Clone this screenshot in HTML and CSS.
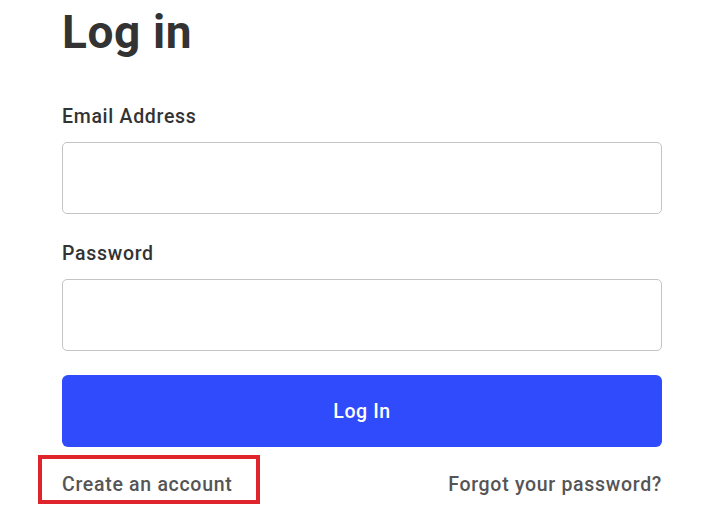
FILE: index.html
```html
<!DOCTYPE html>
<html lang="en">
<head>
<meta charset="utf-8">
<title>Log in</title>
<link rel="stylesheet" href="styles.css">
</head>
<body>
<main class="login">
  <h1 class="title">Log in</h1>
  <form class="form">
    <label class="field">
      <span class="label">Email Address</span>
      <input class="input" type="email">
    </label>
    <label class="field">
      <span class="label">Password</span>
      <input class="input" type="password">
    </label>
    <button class="btn" type="button">Log In</button>
    <div class="links">
      <a class="link link-create" href="#">Create an account</a>
      <a class="link" href="#">Forgot your password?</a>
    </div>
  </form>
</main>
</body>
</html>
```
FILE: styles.css
```css
* { box-sizing: border-box; }
html, body { margin: 0; padding: 0; background: #fff; }
body {
  min-height: 100vh;
  font-family: Roboto, "Liberation Sans", Arial, sans-serif;
  color: #333;
}
.login {
  width: 600px;
  margin-left: 62px;
}
.title {
  margin: 0;
  font-size: 46px;
  font-weight: 700;
  line-height: 64px;
  color: #333;
  letter-spacing: 0.6px;
}
.form {
  display: flex;
  flex-direction: column;
  margin-top: 40px;
}
.field {
  display: flex;
  flex-direction: column;
  margin-bottom: 27px;
}
.label {
  font-size: 19.5px;
  font-weight: 500;
  line-height: 26px;
  color: #333;
  letter-spacing: 0.7px;
  margin-bottom: 12px;
}
.input {
  height: 72px;
  width: 100%;
  border: 1px solid #c4c4c4;
  border-radius: 5px;
  background: #fff;
  font: inherit;
}
.btn {
  margin-top: -3px;
  height: 72px;
  width: 100%;
  border: 0;
  border-radius: 6px;
  background: #2f4bfb;
  color: #fff;
  font-family: inherit;
  font-size: 19.5px;
  font-weight: 500;
  letter-spacing: 0.6px;
}
.links {
  display: flex;
  justify-content: space-between;
  margin-top: 25px;
}
.link {
  font-size: 19.5px;
  font-weight: 500;
  line-height: 26px;
  color: #555;
  letter-spacing: 0.7px;
  text-decoration: none;
}
.link-create { position: relative; }
.link-create::after {
  content: "";
  position: absolute;
  left: -24px;
  right: -28px;
  top: -17px;
  bottom: -6px;
  border: 4px solid #e0242c;
}
```
